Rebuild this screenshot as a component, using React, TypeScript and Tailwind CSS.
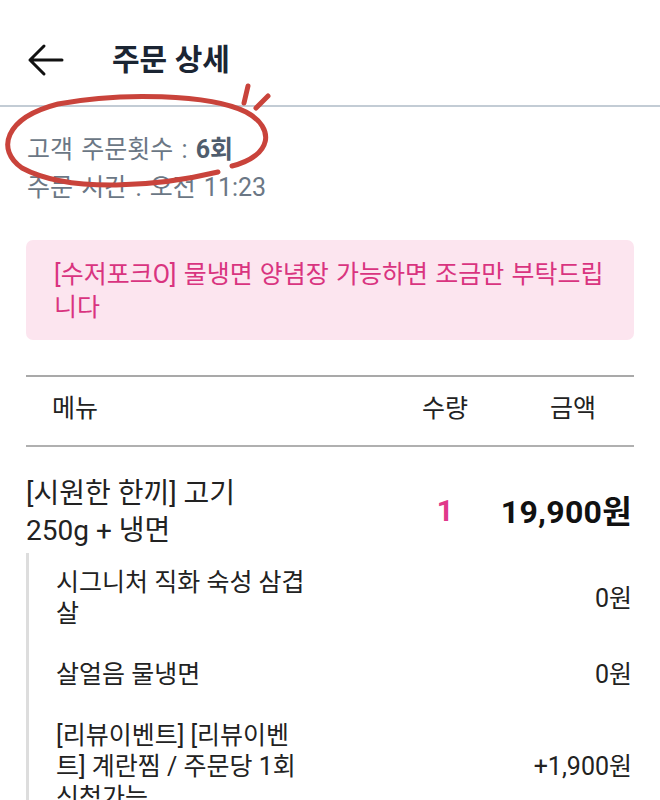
import React from "react";

const subItems = [
  { name: "시그니처 직화 숙성 삼겹살", price: "0원" },
  { name: "살얼음 물냉면", price: "0원" },
  { name: "[리뷰이벤트] [리뷰이벤트] 계란찜 / 주문당 1회 신청가능", price: "+1,900원" },
];

const BackArrow = () => (
  <svg width="38" height="34" viewBox="0 0 38 34" fill="none">
    <path d="M36 17H4M18 3L4 17l14 14" stroke="#111" strokeWidth="3" strokeLinecap="round" strokeLinejoin="round" />
  </svg>
);

const Scribble = () => (
  <svg className="pointer-events-none absolute left-0 top-0" width="300" height="200" viewBox="0 0 300 200" fill="none">
    <path
      d="M218 172C160 186 70 194 22 168C-4 150 4 118 58 104C120 92 210 94 246 112C276 128 272 156 232 166"
      stroke="#c9433b"
      strokeWidth="5"
      strokeLinecap="round"
    />
    <path d="M248 86L244 103M268 96L256 108" stroke="#c9433b" strokeWidth="5" strokeLinecap="round" />
  </svg>
);

export default function App() {
  return (
    <div className="relative min-h-[800px] w-[660px] overflow-hidden bg-white font-['Roboto','Noto_Sans_CJK_KR',sans-serif]">
      <header className="flex h-[105px] items-center pt-[14px]">
        <div className="ml-[26px] flex w-[86px] items-center">
          <BackArrow />
        </div>
        <h1 className="text-[30px] font-bold text-[#1b2533]">주문 상세</h1>
      </header>
      <div className="h-[2px] bg-[#c3ccd5]" />

      <section className="px-[27px] pt-[24px] text-[25px] leading-[38px] text-[#6b7785] [word-spacing:2px]">
        <p>
          고객 주문횟수 : <span className="font-bold text-[#4f5d6d]">6회</span>
        </p>
        <p>주문 시간 : 오전 11:23</p>
      </section>

      <div className="mx-[26px] mt-[33px] rounded-[7px] bg-[#fce5ef] pb-[16px] pl-[28px] pr-[20px] pt-[18px] text-[25px] leading-[33px] text-[#d9347f] [word-spacing:1px]">
        [수저포크O] 물냉면 양념장 가능하면 조금만 부탁드립니다
      </div>

      <div className="mx-[26px] mt-[35px] border-t-2 border-[#a9a9a9] text-[#222]">
        <div className="flex h-[70px] items-center border-b-2 border-[#b0b0b0] pb-[4px] text-[25px]">
          <span className="flex-1 pl-[26px]">메뉴</span>
          <span className="w-[100px] text-center">수량</span>
          <span className="w-[139px] pr-[38px] text-right">금액</span>
        </div>

        <div className="flex items-center pt-[28px]">
          <div className="flex-1">
            <p className="w-[275px] text-[28px] leading-[37px]">[시원한 한끼] 고기 250g + 냉면</p>
          </div>
          <span className="w-[100px] text-center text-[29px] font-bold text-[#e0398a]">1</span>
          <span className="w-[139px] pr-[2px] text-right text-[32px] font-bold tracking-[0.3px] text-[#111]">19,900원</span>
        </div>

        <div className="mt-[4px] flex flex-col gap-[30px] border-l-[3px] border-[#dddddd] pl-[27px] pt-[14px]">
          {subItems.map((s) => (
            <div key={s.name} className="flex items-center text-[25px] leading-[31px]">
              <p className="w-[250px]">{s.name}</p>
              <span className="flex-1 pr-[2px] text-right">{s.price}</span>
            </div>
          ))}
        </div>
      </div>

      <Scribble />
    </div>
  );
}
